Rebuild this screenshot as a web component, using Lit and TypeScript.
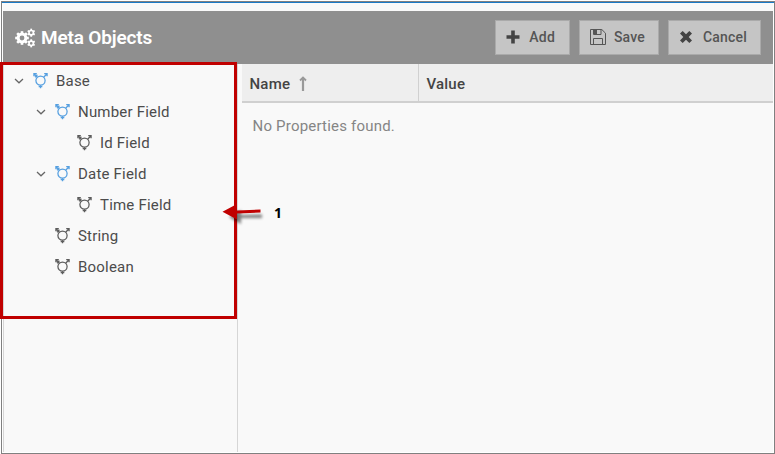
import { LitElement, html, css, svg, nothing } from "lit";
import { customElement } from "lit/decorators.js";
import { classMap } from "lit/directives/class-map.js";

interface MetaNode {
  label: string;
  depth: number;
  parent: boolean;
}

const NODES: MetaNode[] = [
  { label: "Base", depth: 0, parent: true },
  { label: "Number Field", depth: 1, parent: true },
  { label: "Id Field", depth: 2, parent: false },
  { label: "Date Field", depth: 1, parent: true },
  { label: "Time Field", depth: 2, parent: false },
  { label: "String", depth: 1, parent: false },
  { label: "Boolean", depth: 1, parent: false },
];

// One gear outline: square-ended teeth around a ring.
const gear = (cx: number, cy: number, r: number, teeth: number, tooth: number, ring: number) => svg`
  <circle cx=${cx} cy=${cy} r=${r} fill="none" stroke="#fff" stroke-width=${ring}></circle>
  ${Array.from({ length: teeth }, (_, i) => svg`
    <rect x=${cx - tooth / 2} y=${cy - r - ring / 2 - tooth * 0.55} width=${tooth} height=${tooth}
      fill="#fff" transform="rotate(${(360 / teeth) * i} ${cx} ${cy})"></rect>`)}`;

const gears = html`<svg class="gears" width="20" height="20" viewBox="0 0 20 20">
  ${gear(7, 10, 3.9, 8, 2.6, 3)}
  ${gear(16.2, 4.7, 2.2, 6, 1.8, 1.7)}
  ${gear(16.2, 15.3, 2.2, 6, 1.8, 1.7)}
</svg>`;

const plus = html`<svg width="14" height="14" viewBox="0 0 14 14">
  <path d="M5.2 .5h3.6v4.7h4.7v3.6H8.8v4.7H5.2V8.8H.5V5.2h4.7z" fill="#444"></path></svg>`;

const disk = html`<svg width="16" height="16" viewBox="0 0 16 16" fill="none" stroke="#555" stroke-width="1">
  <path d="M.5 .5h11.3l3.7 3.7v11.3H.5z"></path>
  <path d="M3.5 .5v5h7.5v-5M3.5 15.5v-6h9v6"></path>
  <path d="M4 1h3v4H4z" fill="#555" stroke="none"></path></svg>`;

const cross = html`<svg width="12" height="12" viewBox="0 0 12 12">
  <path d="M2.7 0L6 3.2 9.3 0 12 2.6 8.7 6 12 9.4 9.3 12 6 8.8 2.7 12 0 9.4 3.3 6 0 2.6z" fill="#444"></path></svg>`;

const typeIcon = html`<svg class="type" width="16" height="17" viewBox="0 0 16 17" fill="none" stroke="currentColor" stroke-width="1.25">
  <circle cx="7.5" cy="8.6" r="4.6"></circle>
  <path d="M4.4 5.3L1.2 2M.9 4.3V1.6h2.9M2 5.2l2.4-2.4M10.6 5.3l3.2-3.3M11.2 1.6h2.9v2.7M7.5 13.2v3M5.7 14.6h3.6"></path></svg>`;

const chevron = html`<svg width="10" height="6" viewBox="0 0 10 6">
  <path d="M1 1l4 3.8L9 1" fill="none" stroke="#666" stroke-width="1.25"></path></svg>`;

@customElement("app-root")
export class AppRoot extends LitElement {
  static styles = css`
    :host {
      display: block;
      position: relative;
      box-sizing: border-box;
      width: 775px;
      height: 454px;
      padding: 1px 0 0 1px;
      overflow: hidden;
      background: #fff;
      color: #4c4c4c;
      font: 15px/20px Roboto, sans-serif;
      letter-spacing: 0.2px;
    }
    svg { display: block; flex: none; }
    .window {
      box-sizing: border-box;
      height: 453px;
      border: 1px solid #808080;
      padding: 0 1px 1px;
      display: flex;
      flex-direction: column;
    }
    .accent { height: 1px; background: #1979c7; flex: none; margin: 0 -1px; }
    .gap { height: 8px; background: #f9f9f9; flex: none; }
    header {
      height: 53px;
      flex: none;
      box-sizing: border-box;
      background: #8f8f8f;
      display: flex;
      align-items: center;
      padding: 0 12px;
    }
    h1 {
      margin: 0 auto 0 6px;
      color: #fff;
      font-size: 19px;
      line-height: 24px;
      font-weight: 600;
      letter-spacing: -0.17px;
    }
    .actions { display: flex; gap: 9px; }
    button {
      display: flex;
      align-items: center;
      justify-content: space-between;
      box-sizing: border-box;
      height: 35px;
      margin: 0;
      padding: 0 14px 1px 10px;
      border: 1px solid #aaa;
      background: #c5c5c5;
      color: #555;
      font: 500 14px/20px Roboto, sans-serif;
      letter-spacing: 0.2px;
    }
    .add { width: 75px; }
    .save { width: 80px; padding-right: 13px; }
    .cancel { width: 93px; padding: 0 13px 1px 11px; }
    main { flex: 1; display: flex; min-height: 0; background: #f9f9f9; }
    .tree {
      box-sizing: border-box;
      width: 235px;
      border: solid #d6d6d6;
      border-width: 0 1px;
      padding-top: 1px;
    }
    .row { display: flex; align-items: center; height: 31px; padding-left: 10px; }
    .row.d1 { padding-left: 32px; }
    .row.d2 { padding-left: 54px; }
    .toggle { width: 19px; }
    .type { color: #5c5c5c; }
    .parent .type { color: #559fe0; }
    .row span { margin-left: 7px; }
    .grid { flex: 1; margin-left: 4px; }
    .head {
      display: flex;
      height: 37px;
      background: #eee;
      border-bottom: 2px solid #d0d0d0;
      color: #444;
      font-weight: 500;
      line-height: 40px;
    }
    .name { box-sizing: border-box; width: 177px; padding-left: 7.5px; border-right: 1px solid #d0d0d0; display: flex; }
    .name svg { margin: 12px 0 0 9px; }
    .value { padding-left: 7.5px; }
    .empty { margin: 13px 0 0 10.5px; color: #858585; }
    .highlight {
      position: absolute;
      left: 0;
      top: 62px;
      width: 231px;
      height: 251px;
      border: 3px solid #c00000;
    }
    .callout { position: absolute; left: 221px; top: 201px; display: flex; align-items: flex-start; }
    .callout b { margin: 2px 0 0 7px; color: #000; font: 700 14px/20px "Open Sans", sans-serif; letter-spacing: 0; }
  `;

  render() {
    return html`
      <div class="window">
        <div class="accent"></div>
        <div class="gap"></div>
        <header>
          ${gears}
          <h1>Meta Objects</h1>
          <div class="actions">
            <button class="add">${plus}<span>Add</span></button>
            <button class="save">${disk}<span>Save</span></button>
            <button class="cancel">${cross}<span>Cancel</span></button>
          </div>
        </header>
        <main>
          <div class="tree">
            ${NODES.map((n) => html`
              <div class=${classMap({ row: true, parent: n.parent, d1: n.depth === 1, d2: n.depth === 2 })}>
                <div class="toggle">${n.parent ? chevron : nothing}</div>
                ${typeIcon}<span>${n.label}</span>
              </div>`)}
          </div>
          <div class="grid">
            <div class="head">
              <div class="name">Name
                <svg width="8" height="15" viewBox="0 0 8 15" fill="none" stroke="#999">
                  <path d="M4 15V2" stroke-width="2.2"></path>
                  <path d="M1 4.5L4 1.5l3 3" stroke-width="1.8"></path></svg>
              </div>
              <div class="value">Value</div>
            </div>
            <div class="empty">No Properties found.</div>
          </div>
        </main>
      </div>
      <div class="highlight"></div>
      <div class="callout">
        <svg width="46" height="26" viewBox="0 0 46 26">
          <defs><filter id="soft" x="-20%" y="-30%" width="140%" height="160%"><feGaussianBlur stdDeviation="1.6"></feGaussianBlur></filter></defs>
          <path d="M8 16L20 9v5l21-.5v3.5L20 17v6z" fill="#000" opacity=".5" filter="url(#soft)"></path>
          <path d="M1.5 10.7L16 3v6.4l23.5-.9v3L16 12.4v6.1z" fill="#c00000"></path>
        </svg>
        <b>1</b>
      </div>`;
  }
}
